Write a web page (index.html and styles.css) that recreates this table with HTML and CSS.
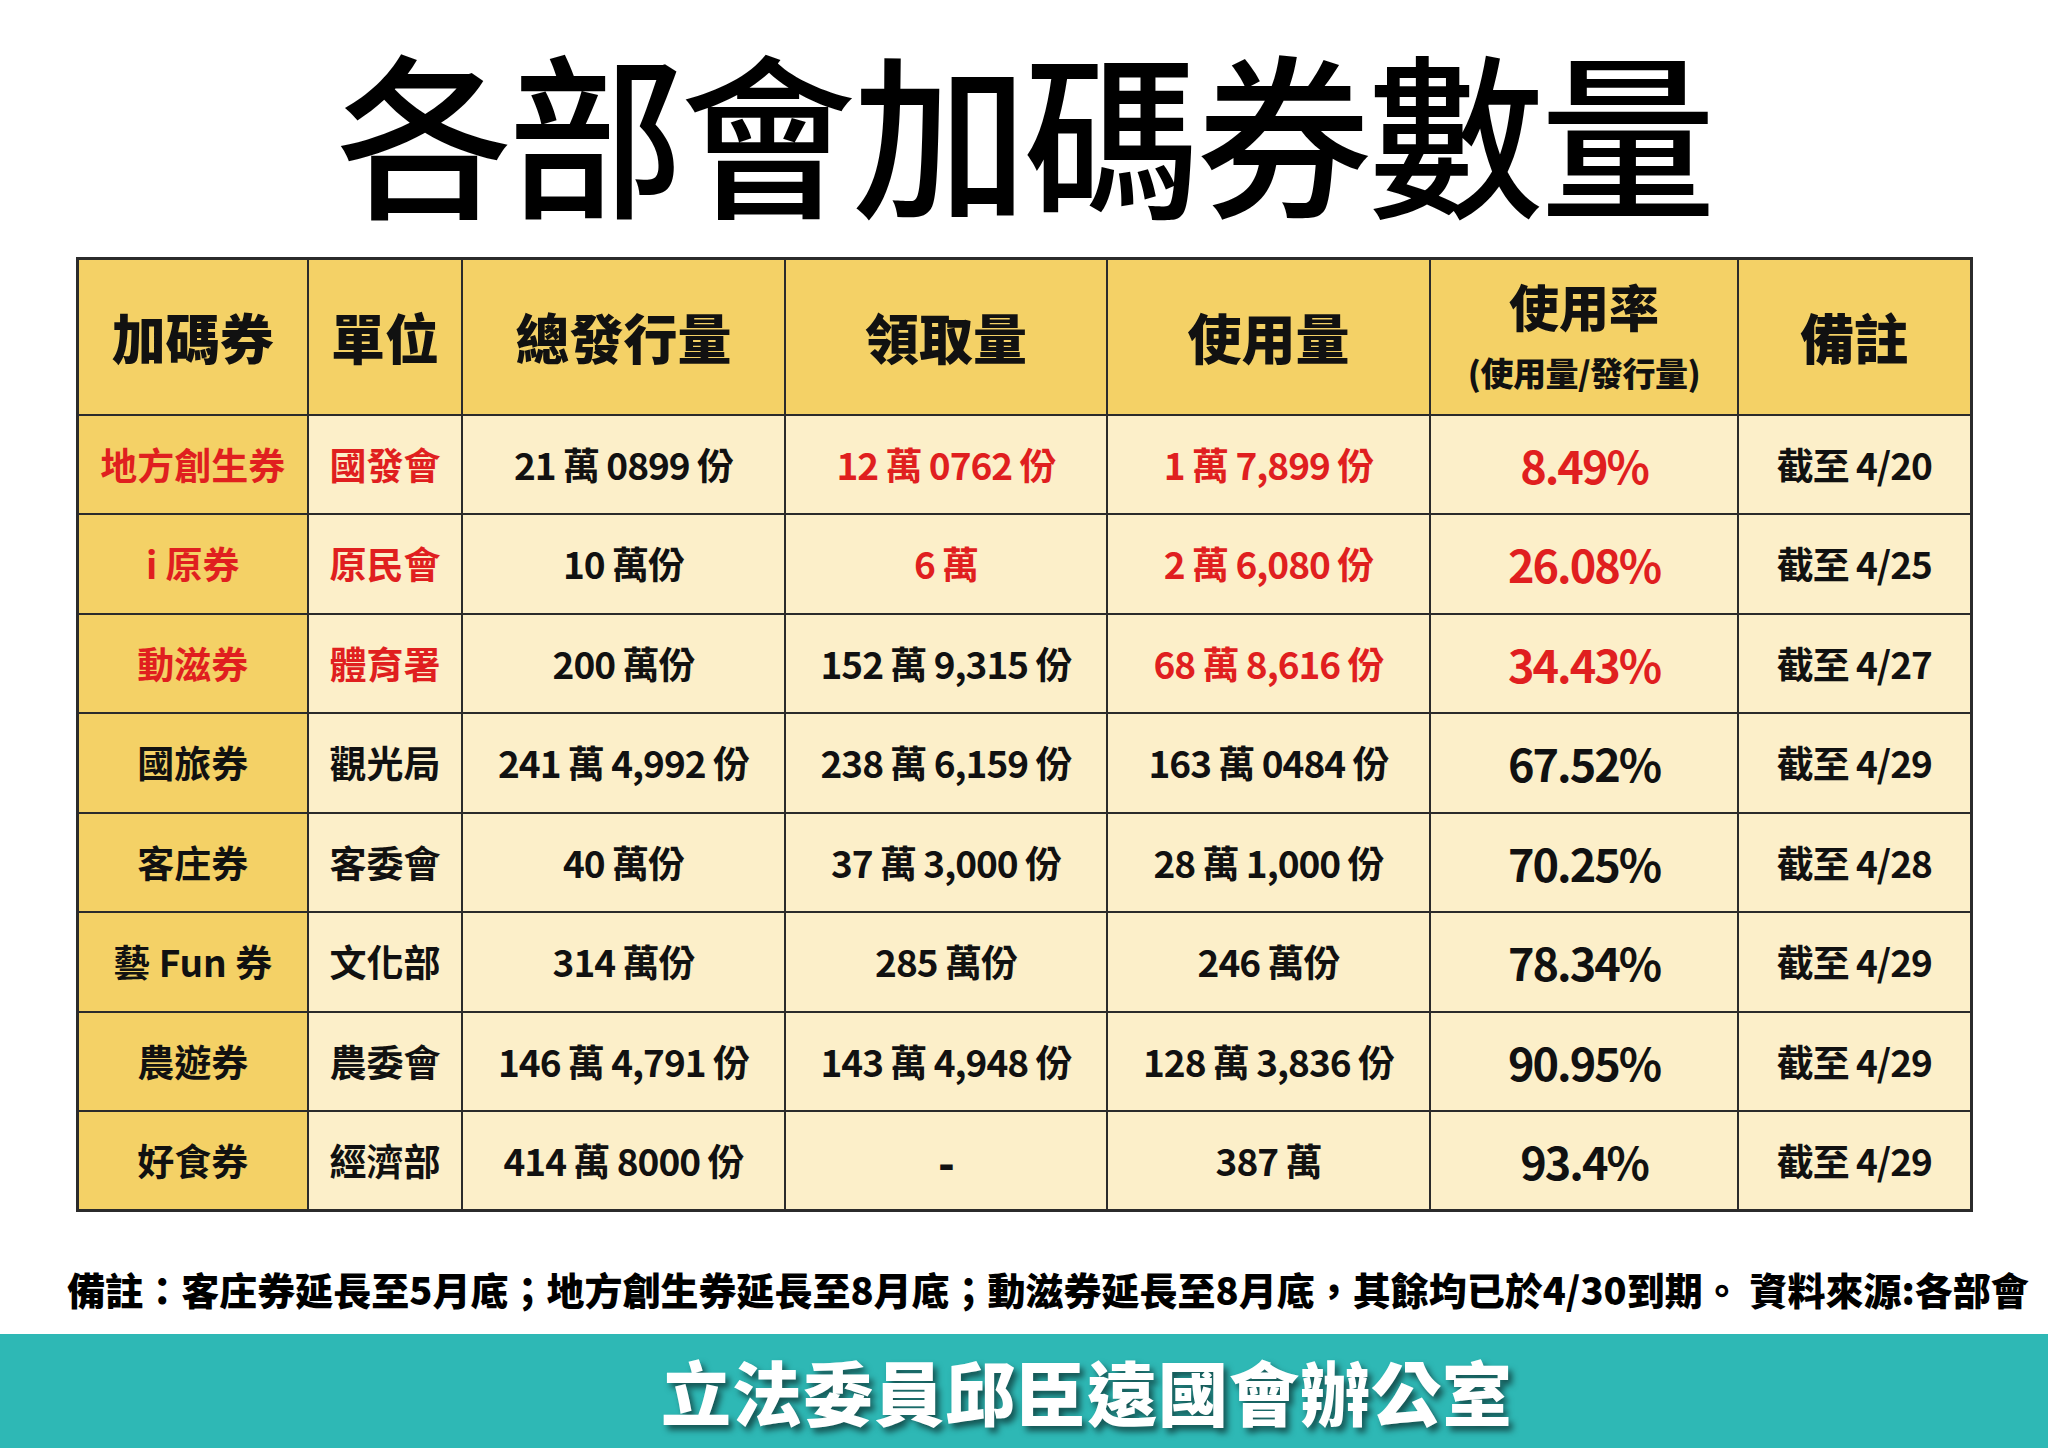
FILE: index.html
```html
<!DOCTYPE html>
<html lang="zh-Hant">
<head>
<meta charset="utf-8">
<title>各部會加碼券數量</title>
<link rel="stylesheet" href="styles.css">
</head>
<body>
<div class="page">
  <h1 class="title">各部會加碼券數量</h1>
  <table class="grid">
    <colgroup>
      <col class="c1"><col class="c2"><col class="c3"><col class="c4"><col class="c5"><col class="c6"><col class="c7">
    </colgroup>
    <thead>
      <tr>
        <th>加碼券</th>
        <th>單位</th>
        <th>總發行量</th>
        <th>領取量</th>
        <th>使用量</th>
        <th><div class="rate-h">使用率</div><div class="rate-sub">(使用量/發行量)</div></th>
        <th>備註</th>
      </tr>
    </thead>
    <tbody>
      <tr>
        <td class="name red">地方創生券</td>
        <td class="red">國發會</td>
        <td class="num">21 萬 0899 份</td>
        <td class="num red">12 萬 0762 份</td>
        <td class="num red">1 萬 7,899 份</td>
        <td class="pct red">8.49%</td>
        <td class="num">截至 4/20</td>
      </tr>
      <tr>
        <td class="name red">i 原券</td>
        <td class="red">原民會</td>
        <td class="num">10 萬份</td>
        <td class="num red">6 萬</td>
        <td class="num red">2 萬 6,080 份</td>
        <td class="pct red">26.08%</td>
        <td class="num">截至 4/25</td>
      </tr>
      <tr>
        <td class="name red">動滋券</td>
        <td class="red">體育署</td>
        <td class="num">200 萬份</td>
        <td class="num">152 萬 9,315 份</td>
        <td class="num red">68 萬 8,616 份</td>
        <td class="pct red">34.43%</td>
        <td class="num">截至 4/27</td>
      </tr>
      <tr>
        <td class="name">國旅券</td>
        <td>觀光局</td>
        <td class="num">241 萬 4,992 份</td>
        <td class="num">238 萬 6,159 份</td>
        <td class="num">163 萬 0484 份</td>
        <td class="pct">67.52%</td>
        <td class="num">截至 4/29</td>
      </tr>
      <tr>
        <td class="name">客庄券</td>
        <td>客委會</td>
        <td class="num">40 萬份</td>
        <td class="num">37 萬 3,000 份</td>
        <td class="num">28 萬 1,000 份</td>
        <td class="pct">70.25%</td>
        <td class="num">截至 4/28</td>
      </tr>
      <tr>
        <td class="name">藝 Fun 券</td>
        <td>文化部</td>
        <td class="num">314 萬份</td>
        <td class="num">285 萬份</td>
        <td class="num">246 萬份</td>
        <td class="pct">78.34%</td>
        <td class="num">截至 4/29</td>
      </tr>
      <tr>
        <td class="name">農遊券</td>
        <td>農委會</td>
        <td class="num">146 萬 4,791 份</td>
        <td class="num">143 萬 4,948 份</td>
        <td class="num">128 萬 3,836 份</td>
        <td class="pct">90.95%</td>
        <td class="num">截至 4/29</td>
      </tr>
      <tr>
        <td class="name">好食券</td>
        <td>經濟部</td>
        <td class="num">414 萬 8000 份</td>
        <td class="num dash">-</td>
        <td class="num">387 萬</td>
        <td class="pct">93.4%</td>
        <td class="num">截至 4/29</td>
      </tr>
    </tbody>
  </table>
  <p class="note">備註：客庄券延長至5月底；地方創生券延長至8月底；動滋券延長至8月底，其餘均已於4/30到期。 資料來源:各部會</p>
  <footer class="band"><span class="band-text">立法委員邱臣遠國會辦公室</span></footer>
</div>
</body>
</html>
```

FILE: styles.css
```css
* { box-sizing: border-box; }
html, body { margin: 0; padding: 0; background: #ffffff; }
body {
  width: 2048px;
  height: 1448px;
  overflow: hidden;
  font-family: "Noto Sans CJK TC", "Noto Sans CJK SC", sans-serif;
  color: #111111;
}
.page {
  display: flex;
  flex-direction: column;
  align-items: center;
  height: 1448px;
}
.title {
  margin: 41px 0 0 0;
  font-size: 176px;
  line-height: 176px;
  height: 176px;
  font-weight: 500;
  letter-spacing: -4px;
  color: #000000;
}
.grid {
  margin-top: 40px;
  border-collapse: collapse;
  table-layout: fixed;
  width: 1894px;
  border: 3px solid #2b2b2b;
}
.c1 { width: 231px; }
.c2 { width: 154px; }
.c3 { width: 323px; }
.c4 { width: 322px; }
.c5 { width: 323px; }
.c6 { width: 308px; }
.c7 { width: 233px; }
.grid th, .grid td {
  border: 2px solid #2b2b2b;
  text-align: center;
  vertical-align: middle;
  padding: 0;
}
.grid th {
  background: #f4d166;
  height: 156px;
  font-size: 54px;
  font-weight: 900;
  line-height: 1;
}
.rate-h { font-size: 50px; line-height: 1; margin-top: -4px; }
.rate-sub { font-size: 33px; line-height: 1; margin-top: 26px; letter-spacing: -0.5px; }
.grid td {
  background: #fcefc9;
  height: 99.5px;
  font-size: 37px;
  font-weight: 700;
  line-height: 1;
}
.grid td.name { background: #f4d166; }
.grid td.num {
  font-size: 37px;
  font-weight: 700;
  letter-spacing: -1px;
}
.grid td.dash { font-size: 44px; font-weight: 900; }
.grid td.pct {
  font-size: 45px;
  font-weight: 700;
  letter-spacing: -2px;
}
.red { color: #e01f1f; }
.note {
  margin: 58px 0 0 0;
  padding-left: 48px;
  font-size: 38px;
  line-height: 38px;
  font-weight: 900;
  color: #000000;
  white-space: nowrap;
  letter-spacing: 0;
}
.band {
  margin-top: auto;
  width: 2048px;
  height: 114px;
  background: #2eb8b5;
  display: flex;
  align-items: center;
  justify-content: center;
  padding-left: 126px;
}
.band-text {
  color: #ffffff;
  font-size: 70px;
  line-height: 1;
  font-weight: 900;
  letter-spacing: 1px;
  text-shadow: 4px 5px 6px rgba(0, 0, 0, 0.55);
}
```
